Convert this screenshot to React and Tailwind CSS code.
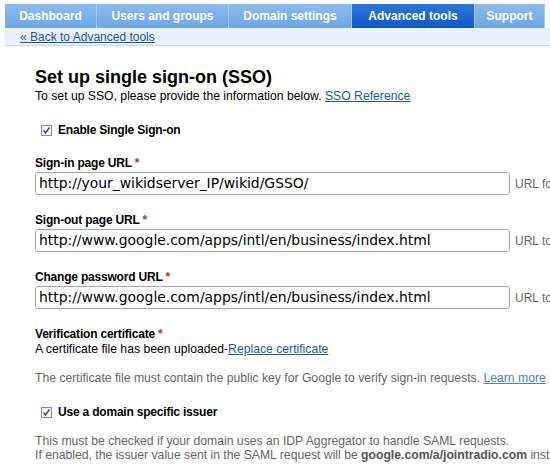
import React from "react";

const tabs = [
  { label: "Dashboard", w: "w-[92px]" },
  { label: "Users and groups", w: "w-[132px]" },
  { label: "Domain settings", w: "w-[123px]" },
  { label: "Advanced tools", w: "w-[123px]", active: true },
  { label: "Support", w: "w-[70px]" },
];

function Check() {
  return (
    <svg width="11" height="11" viewBox="0 0 11 11" className="shrink-0">
      <rect x="0.5" y="0.5" width="10" height="10" fill="#fff" stroke="#7a8ea8" />
      <path d="M2.5 5.5 L4.5 8 L8.5 2.5" fill="none" stroke="#2a4fb0" strokeWidth="1.6" />
    </svg>
  );
}

function Field({ label, value, hint }) {
  return (
    <div className="flex flex-col">
      <div className="font-bold text-[12px] leading-[14px] text-black tracking-[-0.2px]">
        {label} <span className="text-[#c03030]">*</span>
      </div>
      <div className="flex items-center mt-[2px]">
        <div className="w-[475px] h-[23px] shrink-0 border border-[#a8a8a8] rounded-[3px] bg-white flex items-center pl-[3px] text-[13.9px] text-black font-['DejaVu_Sans',sans-serif] overflow-hidden whitespace-nowrap">
          {value}
        </div>
        <span className="ml-[5px] text-[12px] text-[#666] whitespace-nowrap">{hint}</span>
      </div>
    </div>
  );
}

export default function App() {
  return (
    <div className="w-[550px] h-[474px] overflow-hidden bg-white font-['Liberation_Sans',Arial,sans-serif]">
      <div className="pt-[4px] pl-[5px]">
        <div className="flex h-[24px]">
          {tabs.map((t) => (
            <div
              key={t.label}
              className={`${t.w} shrink-0 h-full flex items-center justify-center text-[12px] font-bold text-white border-r border-[#a9c9ee] ${
                t.active
                  ? "bg-gradient-to-b from-[#2a78dc] to-[#0f58c4]"
                  : "bg-gradient-to-b from-[#8dbbef] to-[#6ea6e6]"
              }`}
            >
              {t.label}
            </div>
          ))}
          <div className="flex-1 h-full bg-white" />
        </div>
        <div className="h-[18px] bg-[#e9f1fb] border-b border-[#c6d8ee] flex items-center pl-[15px]">
          <a className="text-[12px] text-[#1b56b3] underline leading-none">« Back to Advanced tools</a>
        </div>
      </div>

      <div className="pl-[35px] pt-[21px] flex flex-col text-[12.2px]">
        <h1 className="text-[18px] font-bold leading-[20px] text-black">Set up single sign-on (SSO)</h1>
        <div className="leading-[14px] text-black mt-[2px]">
          To set up SSO, please provide the information below.{" "}
          <a className="text-[#1b56b3] underline">SSO Reference</a>
        </div>

        <div className="flex items-center gap-[6px] ml-[6px] mt-[20px]">
          <Check />
          <span className="text-[12px] font-bold text-black leading-[14px] tracking-[-0.2px]">Enable Single Sign-on</span>
        </div>

        <div className="mt-[19px] flex flex-col gap-[18px]">
          <Field label="Sign-in page URL" value="http://your_wikidserver_IP/wikid/GSSO/" hint="URL for" />
          <Field label="Sign-out page URL" value="http://www.google.com/apps/intl/en/business/index.html" hint="URL to" />
          <Field label="Change password URL" value="http://www.google.com/apps/intl/en/business/index.html" hint="URL to" />
        </div>

        <div className="mt-[18px] font-bold text-[12px] leading-[14px] text-black tracking-[-0.2px]">
          Verification certificate <span className="text-[#c03030]">*</span>
        </div>
        <div className="leading-[14px] text-black mt-[1px]">
          A certificate file has been uploaded-<a className="text-[#1b56b3] underline">Replace certificate</a>
        </div>
        <div className="leading-[14px] text-[#666] mt-[15px] whitespace-nowrap">
          The certificate file must contain the public key for Google to verify sign-in requests.{" "}
          <a className="text-[#4a80c4] underline">Learn more</a>
        </div>

        <div className="flex items-center gap-[6px] ml-[6px] mt-[20px]">
          <Check />
          <span className="text-[12px] font-bold text-black leading-[14px] tracking-[-0.2px]">Use a domain specific issuer</span>
        </div>

        <div className="mt-[15px] leading-[14px] text-[#666] whitespace-nowrap">
          <div>This must be checked if your domain uses an IDP Aggregator to handle SAML requests.</div>
          <div>
            If enabled, the issuer value sent in the SAML request will be <b className="text-[#555]">google.com/a/jointradio.com</b> instead
          </div>
        </div>
      </div>
    </div>
  );
}
